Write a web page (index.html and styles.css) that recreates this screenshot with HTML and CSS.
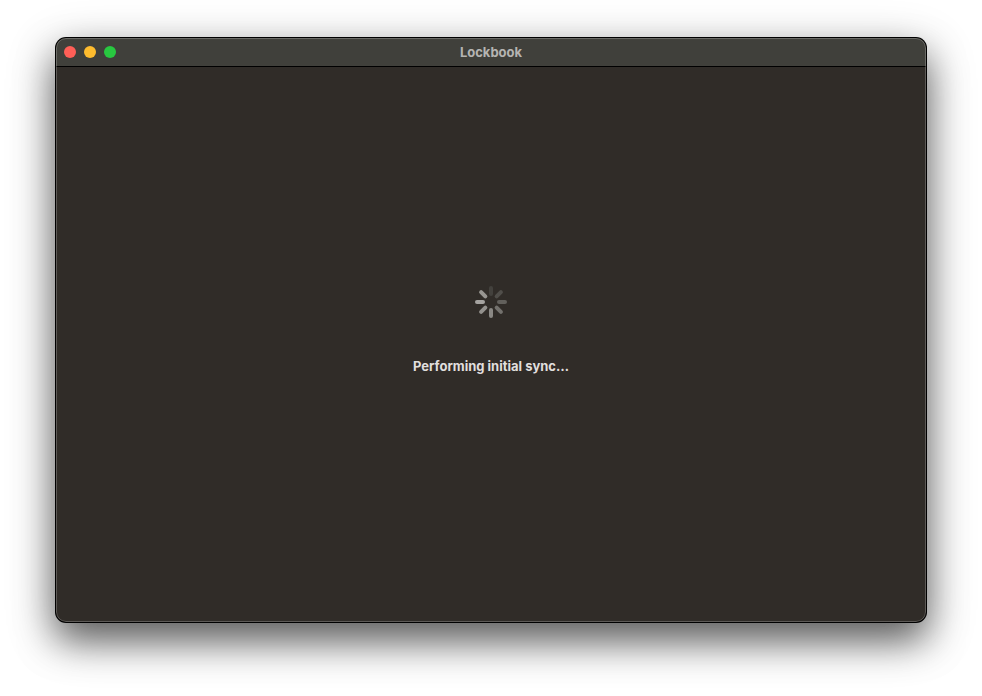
FILE: index.html
```html
<!DOCTYPE html>
<html lang="en">
<head>
<meta charset="utf-8">
<title>Lockbook</title>
<link rel="stylesheet" href="styles.css">
</head>
<body>
<main class="window">
  <header class="titlebar">
    <div class="controls">
      <button class="control close" aria-label="Close"></button>
      <button class="control minimize" aria-label="Minimize"></button>
      <button class="control zoom" aria-label="Zoom"></button>
    </div>
    <h1 class="title">Lockbook</h1>
  </header>
  <section class="content" role="status">
    <svg class="spinner" viewBox="-16 -16 32 32" aria-hidden="true">
      <g stroke-width="4" stroke-linecap="round">
        <path stroke="#43413d" d="M0-8V-14"/>
        <path stroke="#504e4a" d="M0-8V-14" transform="rotate(45)"/>
        <path stroke="#62605c" d="M0-8V-14" transform="rotate(90)"/>
        <path stroke="#73716d" d="M0-8V-14" transform="rotate(135)"/>
        <path stroke="#8a8884" d="M0-8V-14" transform="rotate(180)"/>
        <path stroke="#93918d" d="M0-8V-14" transform="rotate(225)"/>
        <path stroke="#a5a3a0" d="M0-8V-14" transform="rotate(270)"/>
        <path stroke="#979591" d="M0-8V-14" transform="rotate(315)"/>
      </g>
    </svg>
    <p class="message">Performing initial sync…</p>
  </section>
</main>
</body>
</html>
```
FILE: styles.css
```css
* { box-sizing: border-box; }

body {
  margin: 0;
  min-height: 100vh;
  padding: 38px 56px 74px;
  display: flex;
  background: #fff;
  font-family: Inter, sans-serif;
}

.window {
  flex: 1;
  display: flex;
  flex-direction: column;
  overflow: hidden;
  border-radius: 10px;
  background: #302c28;
  box-shadow: 0 0 0 1px #000, 0 18px 36px rgba(0, 0, 0, 0.5), 0 14px 50px rgba(0, 0, 0, 0.3);
  position: relative;
}

.window::after {
  content: "";
  position: absolute;
  inset: 0;
  border: 1px solid rgba(255, 255, 255, 0.22);
  border-radius: 10px;
  pointer-events: none;
}

.titlebar {
  height: 29px;
  padding: 0 8px;
  display: grid;
  grid-template-columns: 1fr auto 1fr;
  align-items: center;
  background: #40403b;
  border-bottom: 1px solid #000;
}

.controls { display: flex; gap: 8px; }

.control {
  width: 12px;
  height: 12px;
  padding: 0;
  border: 0;
  border-radius: 50%;
}

.close { background: #ff5f57; }
.minimize { background: #febc2e; }
.zoom { background: #28c840; }

.title,
.message {
  margin: 0;
  font-size: 13px;
  line-height: 16px;
  font-weight: 700;
}

.title { color: #b5b4b2; }
.message { color: #e0dfde; }

.content {
  flex: 1;
  display: flex;
  flex-direction: column;
  align-items: center;
  justify-content: center;
  gap: 40px;
  padding-bottom: 30px;
}

.spinner { width: 32px; height: 32px; }
```
